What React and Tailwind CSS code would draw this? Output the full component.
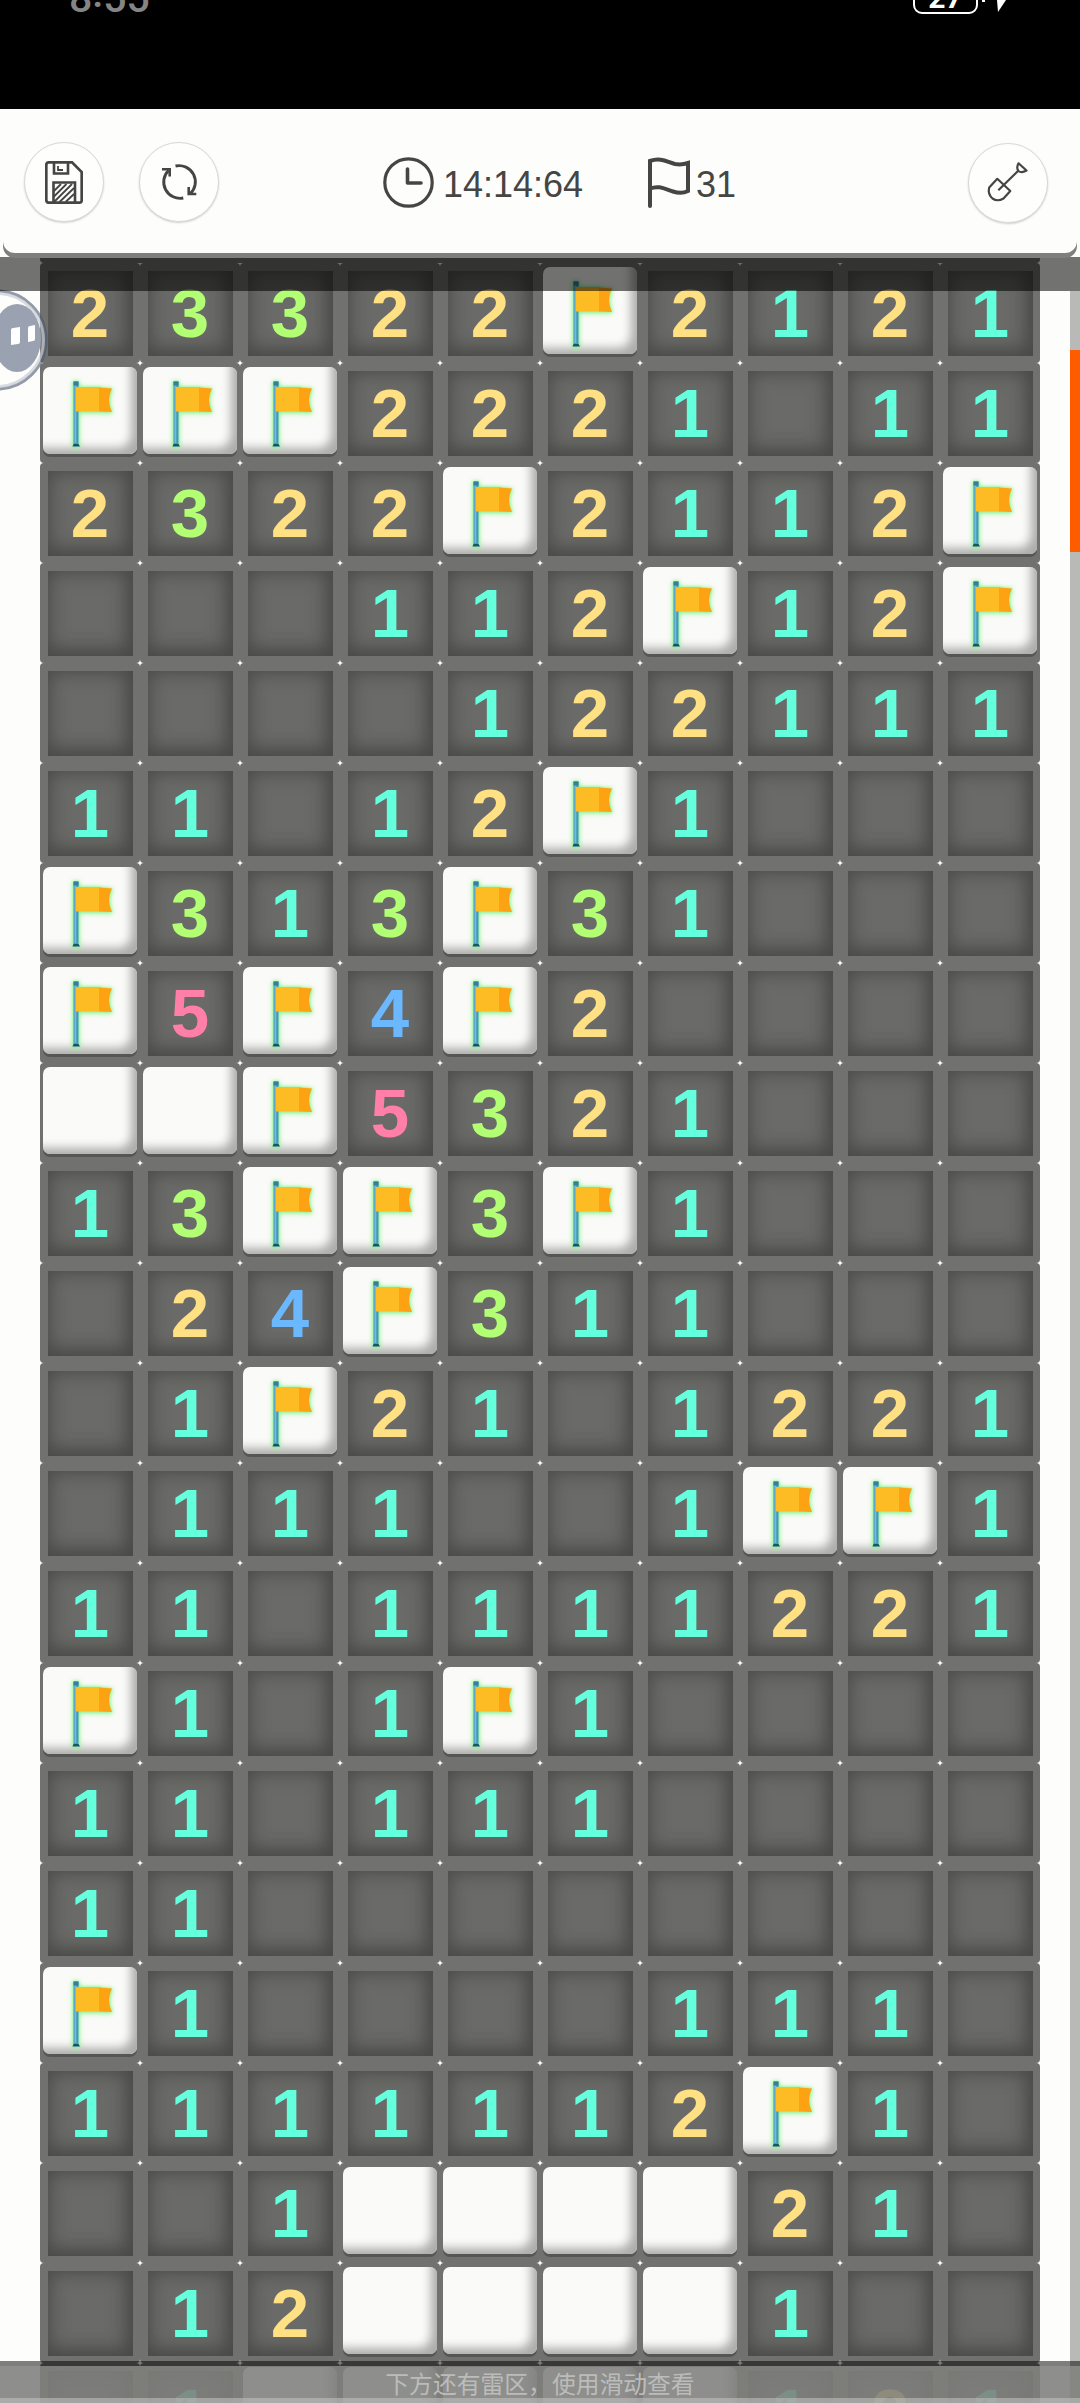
import React from "react";

const ROWS = [
  "23322F2121",
  "FFF2221.11",
  "2322F2112F",
  "...112F12F",
  "....122111",
  "11.12F1...",
  "F313F31...",
  "F5F4F2....",
  "##F5321...",
  "13FF3F1...",
  ".24F311...",
  ".1F21.1221",
  ".111..1FF1",
  "11.1111221",
  "F1.1F1....",
  "11.111....",
  "11........",
  "F1....111.",
  "1111112F1.",
  "..1####21.",
  ".12####1..",
  ".1#####121",
];

const COLORS = {
  1: "text-[#64ffdc]",
  2: "text-[#ffe082]",
  3: "text-[#b2ff73]",
  4: "text-[#6cb8ff]",
  5: "text-[#ff7fa9]",
};

function Flag() {
  return (
    <svg
      viewBox="0 0 94 87"
      className="h-full w-full [filter:drop-shadow(0_0_1.5px_#8cf58c)_drop-shadow(0_1px_2.5px_#8cf58c)]"
    >
      <path d="M29.500 79.500 l1.200-3 h4.600 l1.700 3 z" fill="#17536f" />
      <rect x="30.500" y="14.500" width="5" height="62" fill="#4597bd" />
      <rect x="31.500" y="17" width="1.800" height="59" fill="#74bcd6" />
      <rect x="30.500" y="14.500" width="5" height="4" fill="#357f9b" />
      <path d="M33 20 H57 V44.500 H33 Z" fill="#fdbb24" />
      <path d="M56 20.500 L69 21.500 Q63 33 69 45 L56 44.500 Z" fill="#fda313" />
    </svg>
  );
}

function Cell({ kind }) {
  const raised = kind === "F" || kind === "#";
  return (
    <div className="h-[100px] w-[100px] overflow-hidden rounded-[4px] bg-[#71716f]">
      {raised ? (
        <div className="mt-[4px] ml-[3px] h-[87px] w-[94px] rounded-[7px] bg-[#fafaf8] shadow-[0_3px_0_#565654,inset_-12px_-12px_10px_-6px_#adadab]">
          {kind === "F" && <Flag />}
        </div>
      ) : (
        <div
          className={`mt-2 ml-2 flex h-[85px] w-[85px] items-center justify-center bg-[#6a6a68] pr-px text-[69px] leading-none font-bold shadow-[inset_-5px_-5px_20px_#484846,inset_0_0_20px_#525250] ${COLORS[kind] || ""}`}
        >
          {kind !== "." && kind}
        </div>
      )}
    </div>
  );
}

function RoundButton({ children, className }) {
  return (
    <button
      className={`flex h-20 w-20 shrink-0 items-center justify-center rounded-full border-[1.5px] border-[#d9d9d7] bg-[#fefefd] shadow-[0_1px_2px_#d0d0ce] ${className}`}
    >
      {children}
    </button>
  );
}

export default function App() {
  return (
    <div className="relative flex h-[2403px] w-[1080px] flex-col overflow-hidden bg-[#fdfdfb] font-['Liberation_Sans',sans-serif]">
      <div className="flex h-[109px] shrink-0 items-start justify-between bg-black pr-[73px] pl-[69px]">
        <span className="-mt-[22px] flex font-['Roboto',sans-serif] text-[41px] leading-none font-medium text-[#858585]">
          8<span className="-mt-[5px]">:</span>55
        </span>
        <div className="flex items-start text-white">
          <div className="-mt-[19px] flex h-[33px] w-[65px] items-end justify-center rounded-[9px] border-[2.5px] border-white pb-0 font-['Roboto',sans-serif] text-[30px] leading-[29px] font-bold">
            27
          </div>
          <div className="ml-1 h-[2px] w-[3px] bg-white" />
          <svg viewBox="0 0 10 13" className="ml-[12px] h-[13px] w-[10px]">
            <path d="M0 0H9L1 12Z" fill="white" />
          </svg>
        </div>
      </div>

      <header className="z-20 mx-[3px] flex h-[144px] shrink-0 items-start rounded-b-[12px] bg-[#fdfdfb] pt-[33px] pr-[29px] pl-[21px] text-[#454543] shadow-[0_5px_0_#7f7f7c]">
        <RoundButton>
          <svg viewBox="0 0 38 43" className="h-[43px] w-[38px]" fill="none" stroke="currentColor" strokeWidth="2.700">
            <path d="M3 1.300H27L36.700 11V39.500Q36.700 41.700 34 41.700H4Q1.300 41.700 1.300 39V4Q1.300 1.300 4 1.300Z" />
            <path d="M9 1V12.500H23V1M8.500 42V21.500H30V42" strokeWidth="2.600" />
            <path d="M13 5V9H18M9 30L16 23M9 35.500L21.500 23M9 41L27 23M14.500 41L29 27M20.500 41L29 33" strokeWidth="1.800" />
          </svg>
        </RoundButton>
        <RoundButton className="ml-[35px]">
          <svg viewBox="0 0 38 38" className="h-[38px] w-[38px]" fill="none" stroke="currentColor" strokeWidth="2.900">
            <path d="M15.500 3A16.300 16.300 0 0 1 30 31M23.300 35A16.300 16.300 0 0 1 8.500 7.500" />
            <path d="M2 6.300H9.700V13.500M36.300 31H28.700V24" strokeWidth="2.600" />
          </svg>
        </RoundButton>
        <svg viewBox="0 0 51 51" className="mt-[15px] ml-[164px] h-[51px] w-[51px] shrink-0" fill="none" stroke="currentColor" strokeWidth="3.200">
          <circle cx="25.500" cy="25.500" r="23.700" />
          <path d="M24.500 12V26H38" strokeWidth="3.600" strokeLinecap="round" strokeLinejoin="round" />
        </svg>
        <span className="mt-[25px] ml-[9px] w-[142px] text-[36px] leading-9">14:14:64</span>
        <svg viewBox="0 0 44 51" className="mt-[15px] ml-[62px] h-[51px] w-11 shrink-0" fill="none" stroke="currentColor" strokeWidth="4">
          <path d="M3 49V4C14 0 21 5.500 28 7C34 8 38 7 41 6V34C37 36 32 36.500 26 34.500C18 32 12 28 3 31.500" strokeLinecap="round" />
        </svg>
        <span className="mt-[25px] ml-[5px] text-[36px] leading-9">31</span>
        <RoundButton className="mt-px ml-auto">
          <svg viewBox="0 0 40 40" className="h-10 w-10 overflow-visible" fill="none" stroke="currentColor" strokeWidth="2.200" strokeLinejoin="round">
            <path d="M10.300 27.200L31 7M30.500 0.300L38.500 7.500Q33.500 10.500 30.500 8Q28 5 30.500 0.300Z" />
            <path d="M9.300 15.800L22.300 28L15.500 35.500Q9.500 39 4.500 35.500Q-0.500 31 1.200 24.500Z" />
          </svg>
        </RoundButton>
      </header>

      <main className="shrink-0 self-center">
        <div className="h-[10px] w-[1000px] rounded-b-[4px] bg-[#71716f]" />
        <div className="grid w-[1000px] grid-cols-[repeat(10,100px)]">
          {ROWS.flatMap((row, r) => [...row].map((kind, c) => <Cell key={`${r}-${c}`} kind={kind} />))}
        </div>
      </main>

      {/* scroll track and thumb */}
      <div className="absolute top-[291px] right-0 h-[2112px] w-[10px] bg-[#b9b9b7]">
        <div className="mt-[59px] h-[202px] bg-[#ff5c00]" />
      </div>

      {/* floating assistant bubble */}
      <svg viewBox="0 0 50 104" className="absolute top-[288px] left-0 h-[104px] w-[50px]">
        <circle cx="-3" cy="52" r="49" fill="#ffffff" fillOpacity="0.1" stroke="#4d5870" strokeOpacity="0.6" strokeWidth="3" />
        <circle cx="-3" cy="52" r="46.500" fill="none" stroke="#c5cad3" strokeOpacity="0.65" strokeWidth="3" />
        <ellipse cx="17" cy="50" rx="24" ry="34" fill="#9aa1b0" />
        <path d="M11 42Q11 40 13 40L20 39V54Q20 56 18 56L11 57ZM28 40Q28 38 30 38L35 37V51Q35 53 33 53L28 54Z" fill="white" />
      </svg>

      {/* dimmed edges of the scrolling area */}
      <div className="absolute top-[257px] left-0 z-10 h-[34px] w-full bg-black/55" />
      <div className="absolute bottom-0 left-0 z-10 flex h-[42px] w-full flex-col">
        <div className="h-[5px] bg-black/50" />
        <div className="flex h-8 items-center justify-center bg-[#7e7e7c]/88 pt-[2px] font-['Noto_Sans_CJK_SC',sans-serif] text-[23.8px] leading-8 text-[#bcbcba]">
          下方还有雷区，使用滑动查看
        </div>
        <div className="h-[5px] bg-[#a6a6a4]/95" />
      </div>
    </div>
  );
}
